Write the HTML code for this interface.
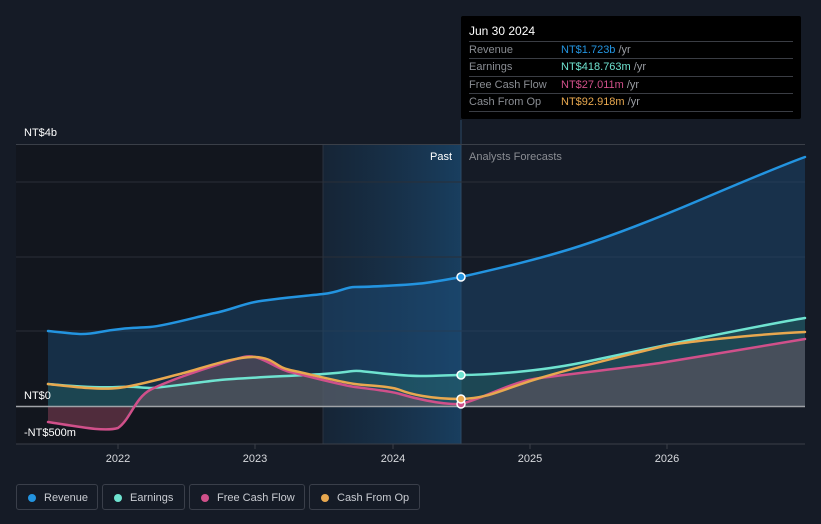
<!DOCTYPE html>
<html><head><meta charset="utf-8"><style>
body{margin:0;width:821px;height:524px;background:#151b26;font-family:"Liberation Sans",sans-serif;overflow:hidden;position:relative}
.tip{position:absolute;left:461px;top:16px;width:340px;height:103px;background:#000;border-radius:2px}
.tip .h{position:absolute;left:8px;top:8px;color:#fff;font-size:12px}
.tip .r{position:absolute;left:8px;width:324px;height:17px;border-top:1px solid #3a3d44;font-size:11px;color:#8a8d93;line-height:17px}
.tip .r span{position:absolute;left:92px}
.tip .r i{font-style:normal;color:#9a9da3}
.leg{position:absolute;top:484px;height:26px;border:1px solid #3a3f4a;border-radius:3px;color:#c9ccd2;font-size:11px;line-height:26px;box-sizing:border-box}
.leg b{position:absolute;left:11px;top:9px;width:8px;height:8px;border-radius:50%}
.leg span{position:absolute;left:27px;top:0}
</style></head><body>
<svg width="821" height="524" style="position:absolute;left:0;top:0">
<defs>
<linearGradient id="hl" x1="0" x2="1" y1="0" y2="0"><stop offset="0" stop-color="#17314a" stop-opacity=".45"/><stop offset="1" stop-color="#1a4a72" stop-opacity=".75"/></linearGradient>
</defs>
<rect x="16" y="144" width="307" height="300" fill="#12161e"/>
<rect x="323" y="144" width="138" height="300" fill="url(#hl)"/>
<line x1="323" y1="144" x2="323" y2="444" stroke="#2a3340"/>
<line x1="461" y1="120" x2="461" y2="444" stroke="#2b4a66"/>
<g stroke="#2a2f38" stroke-width="1">
<line x1="16" y1="144.5" x2="805" y2="144.5" stroke="#3a3f48"/>
<line x1="16" y1="182" x2="805" y2="182"/>
<line x1="16" y1="257" x2="805" y2="257"/>
<line x1="16" y1="331" x2="805" y2="331"/>
<line x1="16" y1="444" x2="805" y2="444" stroke="#3a3f48"/>
</g>
<path d="M48,331 C70,333 80,336 100,332 S135,328 150,327 S200,316 215,313 S240,305 255,302 S305,296 323,294 S345,287 355,287 S410,285 425,283 S450,279 461,277 C500,268 540,259 580,246 S660,217 700,200 S780,166 805,157 L805,406 L48,406Z" fill="#1d4e7a" fill-opacity=".45"/>
<path d="M48,384 L85,388 118,387 150,388 190,384 220,380 255,378 290,376 323,374 350,371 380,373 420,376 461,375 500,373 540,369 580,363 620,355 660,346 700,338 740,329 780,321 805,318 L805,406 L48,406Z" fill="#2b7a6a" fill-opacity=".3"/>
<path d="M48,422 C80,427 105,432 118,428 C130,420 135,398 150,390 S200,370 220,364 S245,355 255,357 S280,370 290,372 S340,385 355,387 S390,391 400,394 S440,405 461,404 C490,396 510,382 540,378 S640,366 660,363 S780,343 805,339 L805,406 L48,406Z" fill="#6a5560" fill-opacity=".55"/>
<path d="M48,406 L48,422 C80,427 105,432 118,428 C125,422 128,410 131,406Z" fill="#5a2438" fill-opacity=".6"/>
<line x1="16" y1="406.5" x2="805" y2="406.5" stroke="#a0a3a8" stroke-width="1.5"/>
<g fill="none" stroke-width="2.5" stroke-linecap="round">
<path d="M48,331 C70,333 80,336 100,332 S135,328 150,327 S200,316 215,313 S240,305 255,302 S305,296 323,294 S345,287 355,287 S410,285 425,283 S450,279 461,277 C500,268 540,259 580,246 S660,217 700,200 S780,166 805,157" stroke="#2394e0"/>
<path d="M48,384 C70,386 100,388 118,387 S140,388 150,388 S200,382 220,380 S290,376 323,374 S350,370 360,371 S400,376 420,376 S450,375 461,375 C490,375 540,371 580,363 S660,346 700,338 S780,322 805,318" stroke="#6fe3d0"/>
<path d="M48,422 C80,427 105,432 118,428 C130,420 135,398 150,390 S200,370 220,364 S245,355 255,357 S280,370 290,372 S340,385 355,387 S390,391 400,394 S440,405 461,404 C490,396 510,382 540,378 S640,366 660,363 S780,343 805,339" stroke="#d0508a"/>
<path d="M48,384 C75,387 100,390 118,388 S160,379 180,374 S235,356 255,357 S275,367 290,370 S340,382 355,384 S390,386 400,390 S430,399 461,399 C490,398 500,390 540,378 S640,352 660,347 S760,334 805,332" stroke="#e8a84f"/>
</g>
<g stroke="#fff" stroke-width="1.5">
<circle cx="461" cy="277" r="4" fill="#2394e0"/>
<circle cx="461" cy="375" r="4" fill="#6fe3d0"/>
<circle cx="461" cy="404" r="4" fill="#d0508a"/>
<circle cx="461" cy="399" r="4" fill="#e8a84f"/>
</g>
<g stroke="#3a3f48"><line x1="118" y1="444" x2="118" y2="449"/><line x1="255" y1="444" x2="255" y2="449"/><line x1="393" y1="444" x2="393" y2="449"/><line x1="530" y1="444" x2="530" y2="449"/><line x1="667" y1="444" x2="667" y2="449"/></g>
<g font-size="11" fill="#fff" font-family="Liberation Sans,sans-serif">
<text x="24" y="136">NT$4b</text>
<text x="24" y="399">NT$0</text>
<text x="24" y="436">-NT$500m</text>
<text x="452" y="160" text-anchor="end">Past</text>
<text x="469" y="160" fill="#8a8d93">Analysts Forecasts</text>
<g text-anchor="middle" fill="#d8dade"><text x="118" y="462">2022</text><text x="255" y="462">2023</text><text x="393" y="462">2024</text><text x="530" y="462">2025</text><text x="667" y="462">2026</text></g>
</g>
</svg>
<div class="tip">
<div class="h">Jun 30 2024</div>
<div class="r" style="top:25px">Revenue<span><b style="font-weight:normal;color:#2394e0">NT$1.723b</b> <i>/yr</i></span></div>
<div class="r" style="top:42px">Earnings<span><b style="font-weight:normal;color:#6fe3d0">NT$418.763m</b> <i>/yr</i></span></div>
<div class="r" style="top:60px">Free Cash Flow<span><b style="font-weight:normal;color:#d0508a">NT$27.011m</b> <i>/yr</i></span></div>
<div class="r" style="top:77px;border-bottom:1px solid #3a3d44">Cash From Op<span><b style="font-weight:normal;color:#e8a84f">NT$92.918m</b> <i>/yr</i></span></div>
</div>
<div class="leg" style="left:16px;width:82px"><b style="background:#2394e0"></b><span>Revenue</span></div>
<div class="leg" style="left:102px;width:83px"><b style="background:#6fe3d0"></b><span>Earnings</span></div>
<div class="leg" style="left:189px;width:116px"><b style="background:#d0508a"></b><span>Free Cash Flow</span></div>
<div class="leg" style="left:309px;width:111px"><b style="background:#e8a84f"></b><span>Cash From Op</span></div>
</body></html>
